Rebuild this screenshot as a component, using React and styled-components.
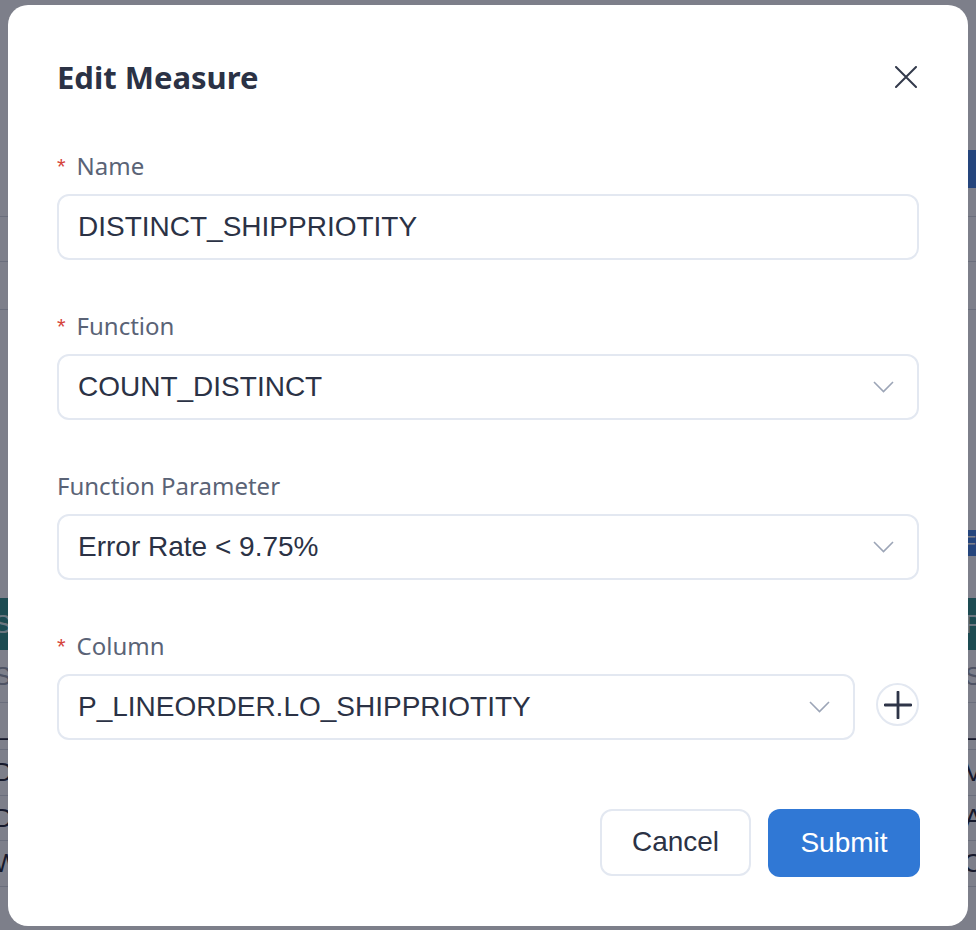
import React from "react";
import styled, { createGlobalStyle } from "styled-components";

const Global = createGlobalStyle`
  html, body { margin: 0; padding: 0; }
  body {
    width: 976px;
    height: 930px;
    overflow: hidden;
    background: #ffffff;
    font-family: "Noto Sans", "Liberation Sans", sans-serif;
  }
  * { box-sizing: border-box; }
`;

/* ---------- background page (dimmed) ---------- */
const Page = styled.div`
  width: 976px;
  height: 930px;
  display: flex;
  flex-direction: column;
  padding-top: 150px;
`;

const TopRow = styled.div`
  display: flex;
  justify-content: flex-end;
  height: ${(p) => p.$h || 38}px;
`;

const BlueBtn = styled.div`
  width: ${(p) => p.$w || 120}px;
  height: ${(p) => p.$h || 38}px;
  background: #3f82e0;
  color: #fff;
  font: 20px "Liberation Sans", sans-serif;
  display: flex;
  align-items: center;
  justify-content: flex-end;
  padding-right: 0;
  border-radius: 3px 0 0 3px;
`;

const ListLine = styled.div`
  height: ${(p) => p.$h}px;
  border-bottom: 1px solid #d6d9e0;
`;

const Spacer = styled.div`
  height: ${(p) => p.$h}px;
`;

const BgTable = styled.div`
  display: flex;
  flex-direction: column;
  margin: 0 -6px;
`;

const BgHead = styled.div`
  height: 52px;
  background: #2f8f86;
  display: flex;
  justify-content: space-between;
  align-items: center;
  color: #d8ecea;
  font: 26px "Liberation Sans", sans-serif;
`;

const BgRow = styled.div`
  height: ${(p) => p.$h || 46}px;
  border-bottom: 1px solid #d6d9e0;
  display: flex;
  justify-content: space-between;
  align-items: center;
  color: ${(p) => (p.$muted ? "#9aa0ad" : "#1f2433")};
  font: 26px "Liberation Sans", sans-serif;
`;

const EdgeText = styled.span`
  display: inline-block;
  padding: 0;
`;

/* ---------- overlay + modal ---------- */
const Overlay = styled.div`
  position: fixed;
  inset: 0;
  background: rgba(14, 19, 38, 0.54);
  display: flex;
  align-items: center;
  justify-content: center;
`;

const Modal = styled.div`
  width: 960px;
  background: #ffffff;
  border-radius: 20px;
  padding: 52px 49px 49px;
  display: flex;
  flex-direction: column;
`;

const Header = styled.div`
  display: flex;
  align-items: center;
  justify-content: space-between;
`;

const Title = styled.h2`
  margin: 0;
  font-family: "Noto Sans", sans-serif;
  font-size: 31px;
  line-height: 40px;
  font-weight: 700;
  color: #2b3245;
`;

const CloseBtn = styled.button`
  border: none;
  background: transparent;
  padding: 0;
  margin-right: 2px;
  width: 22px;
  height: 22px;
  display: flex;
  cursor: pointer;
`;

const Form = styled.div`
  margin-top: 53px;
  display: flex;
  flex-direction: column;
  gap: 50px;
`;

const Field = styled.div`
  display: flex;
  flex-direction: column;
  gap: 12px;
`;

const Label = styled.label`
  display: flex;
  align-items: center;
  font-family: "Noto Sans", sans-serif;
  font-size: 24px;
  line-height: 32px;
  color: #5a6376;
`;

const Required = styled.span`
  color: #d6443c;
  font-family: "Liberation Sans", sans-serif;
  font-size: 22px;
  line-height: 32px;
  margin-right: 11px;
  position: relative;
  top: 1px;
`;

const Box = styled.div`
  height: 66px;
  flex: ${(p) => (p.$grow ? "1 1 auto" : "none")};
  border: 2px solid #e3e8f1;
  border-radius: 12px;
  display: flex;
  align-items: center;
  justify-content: space-between;
  padding: 0 23px 0 19px;
  font-family: "Liberation Sans", Arial, sans-serif;
  font-size: 28px;
  color: #2b3245;
  background: #fff;
`;

const Row = styled.div`
  display: flex;
  align-items: center;
  gap: 21px;
`;

const PlusBtn = styled.button`
  width: 43px;
  height: 43px;
  border-radius: 50%;
  border: 2px solid #e3e8f1;
  background: #fff;
  padding: 0;
  display: flex;
  align-items: center;
  justify-content: center;
  flex-shrink: 0;
  margin-top: -4px;
`;

const Footer = styled.div`
  margin-top: 69px;
  display: flex;
  justify-content: flex-end;
  align-items: flex-start;
  gap: 17px;
`;

const Button = styled.button`
  width: ${(p) => (p.$primary ? 152 : 151)}px;
  height: ${(p) => (p.$primary ? 68 : 67)}px;
  border-radius: 12px;
  border: ${(p) => (p.$primary ? "none" : "2px solid #e3e8f1")};
  background: ${(p) => (p.$primary ? "#3078d5" : "#ffffff")};
  color: ${(p) => (p.$primary ? "#ffffff" : "#2b3245")};
  font-family: "Liberation Sans", Arial, sans-serif;
  font-size: 28px;
  padding: 0;
  margin-right: ${(p) => (p.$primary ? "-1px" : "0")};
  cursor: pointer;
`;

const Chevron = () => (
  <svg width="21" height="12" viewBox="0 0 21 12">
    <polyline
      points="1,1 10.5,10.5 20,1"
      fill="none"
      stroke="#9ca5b7"
      strokeWidth="1.6"
    />
  </svg>
);

const CloseIcon = () => (
  <svg width="22" height="22" viewBox="0 0 22 22">
    <path d="M1 1 L21 21 M21 1 L1 21" stroke="#333a4b" strokeWidth="2" strokeLinecap="round" />
  </svg>
);

const PlusIcon = () => (
  <svg width="28" height="28" viewBox="0 0 28 28">
    <path d="M14 1 V27 M1 14 H27" stroke="#2e3548" strokeWidth="2.8" strokeLinecap="round" />
  </svg>
);

function Select({ value, grow }) {
  return (
    <Box $grow={grow}>
      <span>{value}</span>
      <Chevron />
    </Box>
  );
}

export default function App() {
  return (
    <>
      <Global />
      <Page>
        <TopRow>
          <BlueBtn $w={90} />
        </TopRow>
        <ListLine $h={29} />
        <ListLine $h={45} />
        <ListLine $h={48} />
        <Spacer $h={220} />
        <TopRow $h={26}>
          <BlueBtn $w={60} $h={26}>F</BlueBtn>
        </TopRow>
        <Spacer $h={42} />
        <BgTable>
          <BgHead>
            <EdgeText>S</EdgeText>
            <EdgeText>P</EdgeText>
          </BgHead>
          <BgRow $h={53} $muted>
            <EdgeText>Se</EdgeText>
            <EdgeText>S</EdgeText>
          </BgRow>
          <BgRow $h={47}>
            <EdgeText>_</EdgeText>
            <EdgeText>_</EdgeText>
          </BgRow>
          <BgRow $h={46}>
            <EdgeText>D</EdgeText>
            <EdgeText>V</EdgeText>
          </BgRow>
          <BgRow $h={45}>
            <EdgeText>D</EdgeText>
            <EdgeText>A</EdgeText>
          </BgRow>
          <BgRow $h={46}>
            <EdgeText>W</EdgeText>
            <EdgeText>C</EdgeText>
          </BgRow>
        </BgTable>
      </Page>

      <Overlay>
        <Modal>
          <Header>
            <Title>Edit Measure</Title>
            <CloseBtn aria-label="Close">
              <CloseIcon />
            </CloseBtn>
          </Header>
          <Form>
            <Field>
              <Label>
                <Required>*</Required>Name
              </Label>
              <Box>DISTINCT_SHIPPRIOTITY</Box>
            </Field>
            <Field>
              <Label>
                <Required>*</Required>Function
              </Label>
              <Select value="COUNT_DISTINCT" />
            </Field>
            <Field>
              <Label>Function Parameter</Label>
              <Select value="Error Rate < 9.75%" />
            </Field>
            <Field>
              <Label>
                <Required>*</Required>Column
              </Label>
              <Row>
                <Select grow value="P_LINEORDER.LO_SHIPPRIOTITY" />
                <PlusBtn aria-label="Add">
                  <PlusIcon />
                </PlusBtn>
              </Row>
            </Field>
          </Form>
          <Footer>
            <Button>Cancel</Button>
            <Button $primary>Submit</Button>
          </Footer>
        </Modal>
      </Overlay>
    </>
  );
}
